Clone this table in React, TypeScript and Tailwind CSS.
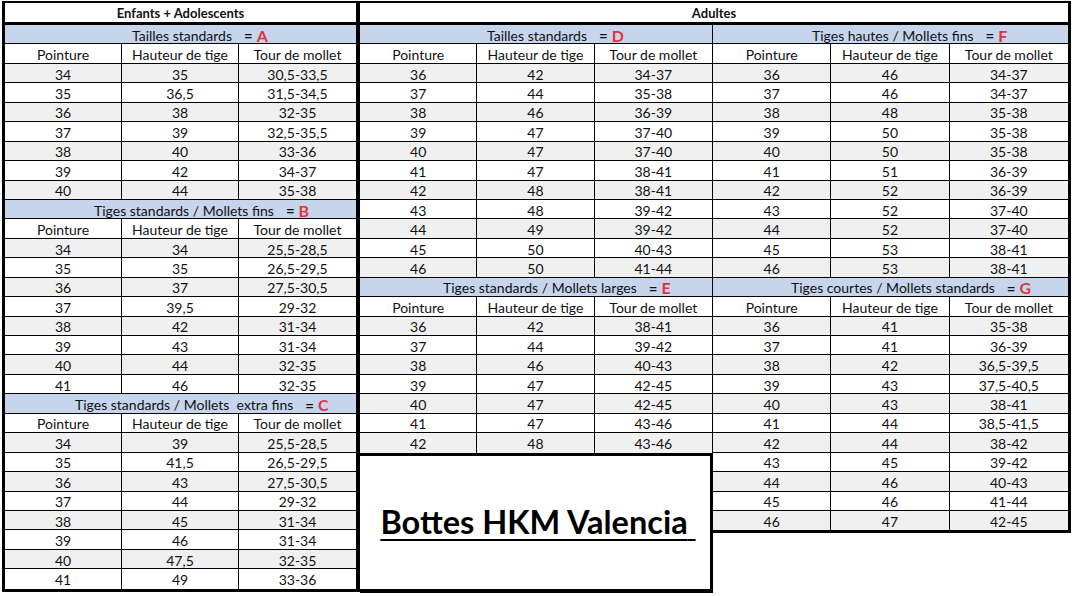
import React from 'react';

type Row = [string, string, string];

const sectionA: Row[] = [
  ['34', '35', '30,5-33,5'],
  ['35', '36,5', '31,5-34,5'],
  ['36', '38', '32-35'],
  ['37', '39', '32,5-35,5'],
  ['38', '40', '33-36'],
  ['39', '42', '34-37'],
  ['40', '44', '35-38'],
];
const sectionB: Row[] = [
  ['34', '34', '25,5-28,5'],
  ['35', '35', '26,5-29,5'],
  ['36', '37', '27,5-30,5'],
  ['37', '39,5', '29-32'],
  ['38', '42', '31-34'],
  ['39', '43', '31-34'],
  ['40', '44', '32-35'],
  ['41', '46', '32-35'],
];
const sectionC: Row[] = [
  ['34', '39', '25,5-28,5'],
  ['35', '41,5', '26,5-29,5'],
  ['36', '43', '27,5-30,5'],
  ['37', '44', '29-32'],
  ['38', '45', '31-34'],
  ['39', '46', '31-34'],
  ['40', '47,5', '32-35'],
  ['41', '49', '33-36'],
];
const sectionD: Row[] = [
  ['36', '42', '34-37'],
  ['37', '44', '35-38'],
  ['38', '46', '36-39'],
  ['39', '47', '37-40'],
  ['40', '47', '37-40'],
  ['41', '47', '38-41'],
  ['42', '48', '38-41'],
  ['43', '48', '39-42'],
  ['44', '49', '39-42'],
  ['45', '50', '40-43'],
  ['46', '50', '41-44'],
];
const sectionE: Row[] = [
  ['36', '42', '38-41'],
  ['37', '44', '39-42'],
  ['38', '46', '40-43'],
  ['39', '47', '42-45'],
  ['40', '47', '42-45'],
  ['41', '47', '43-46'],
  ['42', '48', '43-46'],
];
const sectionF: Row[] = [
  ['36', '46', '34-37'],
  ['37', '46', '34-37'],
  ['38', '48', '35-38'],
  ['39', '50', '35-38'],
  ['40', '50', '35-38'],
  ['41', '51', '36-39'],
  ['42', '52', '36-39'],
  ['43', '52', '37-40'],
  ['44', '52', '37-40'],
  ['45', '53', '38-41'],
  ['46', '53', '38-41'],
];
const sectionG: Row[] = [
  ['36', '41', '35-38'],
  ['37', '41', '36-39'],
  ['38', '42', '36,5-39,5'],
  ['39', '43', '37,5-40,5'],
  ['40', '43', '38-41'],
  ['41', '44', '38,5-41,5'],
  ['42', '44', '38-42'],
  ['43', '45', '39-42'],
  ['44', '46', '40-43'],
  ['45', '46', '41-44'],
  ['46', '47', '42-45'],
];

const Section = ({
  title,
  letter,
  rows,
  indent,
  noLastBorder = false,
}: {
  title: string;
  letter: string;
  rows: Row[];
  indent: string;
  noLastBorder?: boolean;
}) => (
  <div>
    {/* Blue section header, text sits off-centre like in the sheet */}
    <div className={`h-[19.45px] bg-[#c6d5ec] border-b border-black flex items-center pt-[3px] text-[14px] whitespace-pre ${indent}`}>
      <span>{title}</span>
      <span className="font-bold text-[15px] ml-[12px]">=</span>
      <span className="font-bold text-[16px] text-[#e2323c] ml-[4px]">{letter}</span>
    </div>
    <div className="h-[19.45px] grid grid-cols-3 border-b border-black text-[14px]">
      {['Pointure', 'Hauteur de tige', 'Tour de mollet'].map((h, i) => (
        <div key={h} className={`flex items-center justify-center pt-[3px] ${i < 2 ? 'border-r border-black' : ''}`}>
          {h}
        </div>
      ))}
    </div>
    {rows.map((r, idx) => {
      const last = noLastBorder && idx === rows.length - 1;
      return (
        <div
          key={idx}
          className={`h-[19.45px] grid grid-cols-3 text-[14px] ${idx % 2 === 0 ? 'bg-[#f0f0f0]' : 'bg-white'} ${last ? '' : 'border-b border-black'}`}
        >
          {r.map((c, i) => (
            <div key={i} className={`flex items-center justify-center pt-[3px] ${i < 2 ? 'border-r border-black' : ''}`}>
              {c}
            </div>
          ))}
        </div>
      );
    })}
  </div>
);

const App = () => {
  return (
    <div className="w-[1073px] h-[596px] bg-white overflow-hidden pt-[1px] pl-[2px] font-['Lato','Liberation_Sans',sans-serif] text-[#111] leading-none">
      <div className="flex items-start">
        {/* Enfants + Adolescents */}
        <div className="w-[358px] border-l-[3px] border-r-[4px] border-t-2 border-b-[3px] border-black">
          <div className="h-[17px] box-content pt-[2px] border-b-[3px] border-black flex items-center justify-center font-bold text-[13px]">
            Enfants + Adolescents
          </div>
          <Section title="Tailles standards" letter="A" rows={sectionA} indent="pl-[127px]" />
          <Section title="Tiges standards / Mollets fins" letter="B" rows={sectionB} indent="pl-[89px]" />
          <Section title="Tiges standards / Mollets  extra fins" letter="C" rows={sectionC} indent="pl-[70px]" noLastBorder />
        </div>

        {/* Adultes */}
        <div className="w-[711px]">
          <div className="h-[17px] box-content pt-[2px] border-t-2 border-r-[3px] border-b-[3px] border-black flex items-center justify-center font-bold text-[13px]">
            Adultes
          </div>
          <div className="flex items-start">
            <div className="w-[353px]">
              <div className="border-r border-black">
                <Section title="Tailles standards" letter="D" rows={sectionD} indent="pl-[127px]" />
                <Section title="Tiges standards / Mollets larges" letter="E" rows={sectionE} indent="pl-[83px]" noLastBorder />
              </div>
              <div className="h-[140px] border-t-[3px] border-r-[3px] border-b-4 border-black flex items-center justify-center pl-[6px]">
                <span className="font-bold text-[32.5px] text-black underline decoration-2 underline-offset-[5px] whitespace-pre">
                  Bottes HKM Valencia{' '}
                </span>
              </div>
            </div>
            <div className="w-[358px] border-r-[3px] border-b-[3px] border-black">
              <Section title="Tiges hautes / Mollets fins" letter="F" rows={sectionF} indent="pl-[99px]" />
              <Section title="Tiges courtes / Mollets standards" letter="G" rows={sectionG} indent="pl-[78px]" noLastBorder />
            </div>
          </div>
        </div>
      </div>
    </div>
  );
};

export default App;
